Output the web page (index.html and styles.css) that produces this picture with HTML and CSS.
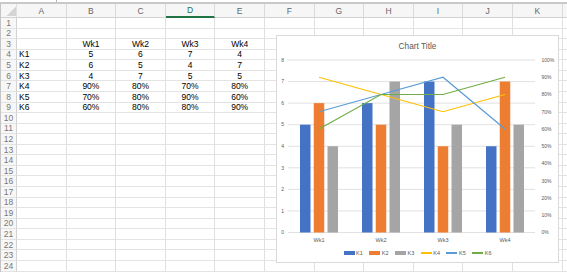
FILE: index.html
```html
<!DOCTYPE html>
<html lang="en">
<head>
  <meta charset="UTF-8" />
  <title>Chart sheet</title>
  <link rel="stylesheet" href="styles.css">
</head>
<body>
  <div class="workbook">
    <div class="topbar"><div class="namebox"></div></div>
    <div class="sheet" id="sheet">
      <!-- cells are built below -->
    </div>

    <div class="chart">
      <div class="chart-title">Chart Title</div>
      <svg class="plot" id="plot" width="281" height="190" viewBox="0 0 281 190"></svg>
      <div class="legend">
        <span class="item"><i class="swatch k1"></i>K1</span>
        <span class="item"><i class="swatch k2"></i>K2</span>
        <span class="item"><i class="swatch k3"></i>K3</span>
        <span class="item"><i class="swatch line k4"></i>K4</span>
        <span class="item"><i class="swatch line k5"></i>K5</span>
        <span class="item"><i class="swatch line k6"></i>K6</span>
      </div>
    </div>
  </div>

  <script>
    // last column only peeks in at the edge, so it gets no label
    const cols = ["A", "B", "C", "D", "E", "F", "G", "H", "I", "J", "K", ""];
    const rowCount = 24;
    const data = {
      3: ["", "Wk1", "Wk2", "Wk3", "Wk4"],
      4: ["K1", "5", "6", "7", "4"],
      5: ["K2", "6", "5", "4", "7"],
      6: ["K3", "4", "7", "5", "5"],
      7: ["K4", "90%", "80%", "70%", "80%"],
      8: ["K5", "70%", "80%", "90%", "60%"],
      9: ["K6", "60%", "80%", "80%", "90%"]
    };

    const sheet = document.getElementById("sheet");
    let html = '<div class="corner"></div>';
    cols.forEach(c => {
      html += `<div class="col-head${c === "D" ? " active" : ""}">${c}</div>`;
    });
    for (let r = 1; r <= rowCount; r++) {
      html += `<div class="row-head">${r}</div>`;
      const vals = data[r] || [];
      cols.forEach((c, i) => {
        const v = vals[i] || "";
        html += `<div class="cell${i === 0 ? " left" : ""}">${v}</div>`;
      });
    }
    sheet.innerHTML = html;

    // chart: svg coords, plotTop = 8 on left axis / 100% on right axis
    const plotTop = 4, base = 176.5, x0 = 11, x1 = 258;
    const unit = (base - plotTop) / 8;
    const pct = (p) => base - p * (base - plotTop);
    const centers = [42, 104, 166, 228];
    const bars = [
      { cls: "k1", dx: -19, vals: [5, 6, 7, 4] },
      { cls: "k2", dx: -5.25, vals: [6, 5, 4, 7] },
      { cls: "k3", dx: 8.5, vals: [4, 7, 5, 5] }
    ];
    const lines = [
      { cls: "k4", vals: [0.9, 0.8, 0.7, 0.8] },
      { cls: "k5", vals: [0.7, 0.8, 0.9, 0.6] },
      { cls: "k6", vals: [0.6, 0.8, 0.8, 0.9] }
    ];

    let svg = "";
    for (let i = 0; i <= 8; i++) {
      const y = base - i * unit;
      svg += `<line class="grid" x1="${x0}" x2="${x1}" y1="${y}" y2="${y}"/>`;
      svg += `<text class="axis" x="7" y="${y}" text-anchor="end" dy="1.8">${i}</text>`;
    }
    for (let i = 0; i <= 10; i++) {
      svg += `<text class="axis" x="264.5" y="${pct(i / 10)}" dy="1.8">${i * 10}%</text>`;
    }
    bars.forEach(b => {
      b.vals.forEach((v, i) => {
        const y = base - v * unit;
        svg += `<rect class="${b.cls}" x="${centers[i] + b.dx}" y="${y}" width="10.5" height="${base - y}"/>`;
      });
    });
    lines.forEach(l => {
      const pts = l.vals.map((p, i) => `${centers[i]},${pct(p)}`).join(" ");
      svg += `<polyline class="${l.cls}" points="${pts}"/>`;
    });
    centers.forEach((c, i) => {
      svg += `<text class="cat" x="${c}" y="186" text-anchor="middle">Wk${i + 1}</text>`;
    });
    document.getElementById("plot").innerHTML = svg;
  </script>
</body>
</html>
```

FILE: styles.css
```css
* {
  box-sizing: border-box;
}
body {
  margin: 0;
  font-family: "Liberation Sans", Arial, sans-serif;
  background-color: #ffffff;
  color: #000000;
  overflow: hidden;
}
.workbook {
  position: relative;
  width: 567px;
  height: 273px;
  overflow: hidden;
}
.topbar {
  height: 4px;
  border-bottom: 2px solid #c9c9c9;
  display: flex;
}
.namebox {
  width: 57px;
  height: 2px;
  border-right: 1px solid #b5b5b5;
}
.sheet {
  display: grid;
  grid-template-columns: 16px repeat(12, 49.6px);
  grid-template-rows: 14px repeat(24, 10.57px);
  border-left: 1px solid #c4c4c4;
  font-size: 8.5px;
  line-height: 10px;
}
.sheet > div {
  display: flex;
  align-items: center;
  justify-content: center;
  overflow: hidden;
  white-space: nowrap;
  border-right: 1px solid #e0e0e0;
  border-bottom: 1px solid #e3e3e3;
}
.corner {
  background-color: #f6f6f6;
  border-bottom: 1px solid #d2d2d2 !important;
}
.corner::after {
  content: "";
  width: 9px;
  height: 9px;
  margin: auto 0 1px auto;
  background: linear-gradient(to top left, #d4d4d4 50%, transparent 50%);
}
.col-head {
  background-color: #f6f6f6;
  color: #666666;
  border-bottom: 1px solid #d2d2d2 !important;
  border-right-color: #dadada !important;
}
.col-head.active {
  color: #217346;
  border-bottom: 2px solid #217346 !important;
}
.row-head {
  background-color: #f7f7f7;
  color: #777777;
  border-right-color: #d2d2d2 !important;
}
.cell.left {
  justify-content: flex-start;
  padding-left: 2px;
}

/* chart sits over the grid */
.chart {
  position: absolute;
  left: 276px;
  top: 35px;
  width: 283px;
  height: 228px;
  background-color: #ffffff;
  border: 1px solid #d9d9d9;
}
.chart-title {
  height: 20px;
  line-height: 20px;
  text-align: center;
  font-size: 8.3px;
  color: #595959;
}
.plot {
  display: block;
}
.plot .grid {
  stroke: #d9d9d9;
  stroke-width: 0.8;
}
.plot .axis {
  font-size: 5px;
  fill: #595959;
}
.plot .cat {
  font-size: 5.5px;
  fill: #595959;
}
.plot rect.k1 { fill: #4472c4; }
.plot rect.k2 { fill: #ed7d31; }
.plot rect.k3 { fill: #a5a5a5; }
.plot polyline {
  fill: none;
  stroke-width: 1.2;
}
.plot polyline.k4 { stroke: #ffc000; }
.plot polyline.k5 { stroke: #5b9bd5; }
.plot polyline.k6 { stroke: #70ad47; }
.legend {
  height: 14px;
  display: flex;
  justify-content: center;
  align-items: center;
  gap: 6.5px;
  font-size: 5.5px;
  color: #595959;
}
.legend .item {
  display: flex;
  align-items: center;
}
.swatch {
  display: inline-block;
  width: 11px;
  height: 3.5px;
  margin-right: 1.5px;
}
.swatch.line {
  height: 1.2px;
}
.swatch.k1 { background-color: #4472c4; }
.swatch.k2 { background-color: #ed7d31; }
.swatch.k3 { background-color: #a5a5a5; }
.swatch.k4 { background-color: #ffc000; }
.swatch.k5 { background-color: #5b9bd5; }
.swatch.k6 { background-color: #70ad47; }
```
